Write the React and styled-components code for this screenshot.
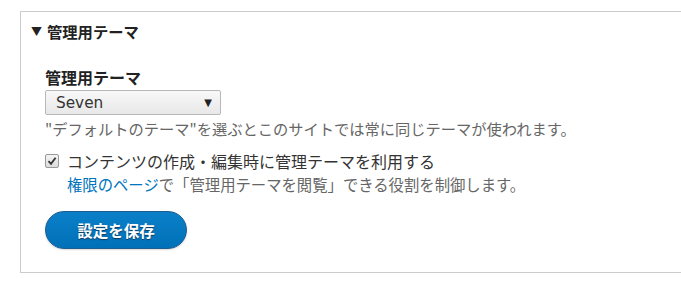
import React from "react";
import styled, { createGlobalStyle } from "styled-components";

const GlobalStyle = createGlobalStyle`
    body{
        margin: 0;
        background: #ffffff;
        font-family: "Noto Sans CJK JP", "DejaVu Sans", sans-serif;
        color: #333333;
        overflow: hidden;
    }
`;

const Page = styled.div`
    padding: 11px 0 0 20px;
    width: 681px;
    box-sizing: border-box;
`;

const Panel = styled.section`
    border: 1px solid #cccccc;
    border-right: none;
    margin-right: -10px;
    height: 262px;
    box-sizing: border-box;
    padding: 8px 0 0 10px;
`;

const Summary = styled.div`
    display: flex;
    align-items: center;
    gap: 5px;
    font-size: 15.3px;
    font-weight: 700;
    color: #222222;
    line-height: 22px;
    .arrow{
        font-size: 11px;
        color: #222222;
    }
`;

const Body = styled.div`
    padding: 25px 0 0 14px;
    display: flex;
    flex-direction: column;
`;

const Label = styled.label`
    font-size: 16px;
    font-weight: 700;
    color: #222222;
    line-height: 20px;
    margin-bottom: 3px;
`;

const Select = styled.div`
    width: 176px;
    height: 25px;
    box-sizing: border-box;
    border: 1px solid #b8b8b8;
    border-radius: 2px;
    background: linear-gradient(#f8f8f8, #e8e8e8);
    display: flex;
    align-items: center;
    justify-content: space-between;
    padding: 0 8px 0 10px;
    font-family: "DejaVu Sans", sans-serif;
    font-size: 15.3px;
    color: #333333;
    .caret{
        font-size: 10px;
        color: #222222;
    }
`;

const Description = styled.div`
    font-size: 15.25px;
    color: #666666;
    line-height: 22px;
    margin-top: 2px;
`;

const CheckRow = styled.div`
    display: flex;
    align-items: center;
    gap: 8px;
    margin-top: 12px;
    font-size: 16px;
    color: #333333;
    line-height: 20px;
`;

const Box = styled.span`
    width: 12px;
    height: 12px;
    border: 1px solid #999999;
    border-radius: 2px;
    background: linear-gradient(#f4f4f4, #dcdcdc);
    display: flex;
    align-items: center;
    justify-content: center;
`;

const Help = styled.div`
    padding-left: 22px;
    font-size: 15.35px;
    color: #666666;
    line-height: 22px;
    margin-top: 2px;
    a{
        color: #0074bd;
        text-decoration: none;
    }
`;

const SaveButton = styled.button`
    margin-top: 16px;
    align-self: flex-start;
    width: 142px;
    height: 38px;
    border-radius: 20px;
    border: 1px solid #1e5c90;
    background: linear-gradient(#0a7fc8, #0071b8);
    color: #ffffff;
    font-family: "Noto Sans CJK JP", sans-serif;
    font-size: 15.5px;
    font-weight: 700;
    text-shadow: 0 1px 1px #0a3a60;
    box-shadow: 0 1px 2px rgba(0, 0, 0, 0.15);
`;

function App(){
    return(
        <Page>
            <GlobalStyle />
            <Panel>
                <Summary>
                    <span className="arrow">▼</span>
                    <span>管理用テーマ</span>
                </Summary>
                <Body>
                    <Label>管理用テーマ</Label>
                    <Select>
                        <span>Seven</span>
                        <span className="caret">▼</span>
                    </Select>
                    <Description>"デフォルトのテーマ"を選ぶとこのサイトでは常に同じテーマが使われます。</Description>
                    <CheckRow>
                        <Box>
                            <svg width="10" height="10" viewBox="0 0 10 10">
                                <path d="M1.5 5.2 L4 7.8 L8.6 1.8" fill="none" stroke="#333" strokeWidth="1.8" />
                            </svg>
                        </Box>
                        <span>コンテンツの作成・編集時に管理テーマを利用する</span>
                    </CheckRow>
                    <Help><a href="#">権限のページ</a>で「管理用テーマを閲覧」できる役割を制御します。</Help>
                    <SaveButton>設定を保存</SaveButton>
                </Body>
            </Panel>
        </Page>
    )
}

export default App
